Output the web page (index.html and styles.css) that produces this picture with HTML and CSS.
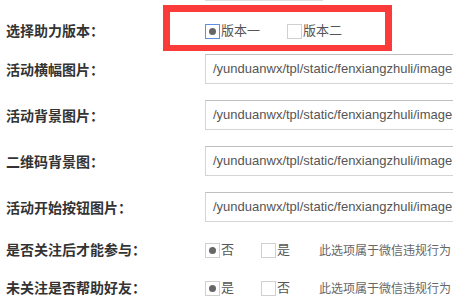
FILE: index.html
```html
<!DOCTYPE html>
<html lang="zh-CN">
<head>
<meta charset="utf-8">
<link rel="stylesheet" href="styles.css">
</head>
<body>
<div class="page">
  <div class="prev-edge"></div>
  <div class="row row-version">
    <div class="label">选择助力版本：</div>
    <div class="field">
      <label class="opt"><span class="box box-focus"><span class="dot"></span></span><span class="opt-text">版本一</span></label>
      <label class="opt"><span class="box"></span><span class="opt-text">版本二</span></label>
    </div>
    <div class="highlight"></div>
  </div>
  <div class="row">
    <div class="label">活动横幅图片：</div>
    <div class="field"><div class="input">/yunduanwx/tpl/static/fenxiangzhuli/image</div></div>
  </div>
  <div class="row">
    <div class="label">活动背景图片：</div>
    <div class="field"><div class="input">/yunduanwx/tpl/static/fenxiangzhuli/image</div></div>
  </div>
  <div class="row">
    <div class="label">二维码背景图：</div>
    <div class="field"><div class="input">/yunduanwx/tpl/static/fenxiangzhuli/image</div></div>
  </div>
  <div class="row">
    <div class="label">活动开始按钮图片：</div>
    <div class="field"><div class="input">/yunduanwx/tpl/static/fenxiangzhuli/image</div></div>
  </div>
  <div class="row row-radio row-r1">
    <div class="label">是否关注后才能参与：</div>
    <div class="field">
      <label class="opt"><span class="box"><span class="dot"></span></span><span class="opt-text">否</span></label>
      <label class="opt"><span class="box"></span><span class="opt-text">是</span></label>
      <span class="hint">此选项属于微信违规行为</span>
    </div>
  </div>
  <div class="row row-radio row-r2">
    <div class="label">未关注是否帮助好友：</div>
    <div class="field">
      <label class="opt"><span class="box"><span class="dot"></span></span><span class="opt-text">是</span></label>
      <label class="opt"><span class="box"></span><span class="opt-text">否</span></label>
      <span class="hint">此选项属于微信违规行为</span>
    </div>
  </div>
</div>
</body>
</html>
```

FILE: styles.css
```css
html, body {
  margin: 0;
  padding: 0;
  background: #ffffff;
  overflow: hidden;
}

.page {
  width: 453px;
  height: 299px;
  overflow: hidden;
  font-family: "Noto Sans CJK SC", "Liberation Sans", sans-serif;
  color: #333333;
}

.prev-edge {
  margin-left: 205px;
  width: 118px;
  height: 1px;
  background: #dddddd;
}

.row {
  position: relative;
  display: flex;
  align-items: center;
  height: 30px;
  margin-bottom: 16px;
}

.row-version {
  margin-top: 14px;
  margin-bottom: 9px;
}

.row-r1 {
  margin-top: -4px;
  margin-bottom: 8px;
}

.label {
  width: 199px;
  padding-left: 6px;
  flex-shrink: 0;
  font-size: 14px;
  font-weight: bold;
  line-height: 30px;
  color: #333333;
  white-space: nowrap;
}

.field {
  display: flex;
  align-items: center;
  flex: 1;
  min-width: 0;
}

.input {
  box-sizing: border-box;
  width: 248px;
  height: 30px;
  flex-shrink: 0;
  border: 1px solid #d4d4d4;
  border-top-color: #bfbfbf;
  border-right: none;
  padding: 0 0 0 7px;
  font-family: "Liberation Sans", Arial, sans-serif;
  font-size: 13px;
  line-height: 28px;
  color: #555555;
  white-space: nowrap;
}

.opt {
  display: flex;
  align-items: center;
  margin-right: 27px;
  font-size: 13px;
  line-height: 18px;
  color: #555555;
}

.box {
  box-sizing: border-box;
  width: 15px;
  height: 15px;
  border: 1px solid #d0d0d0;
  background: #ffffff;
  display: flex;
  align-items: center;
  justify-content: center;
  margin-right: 1px;
  margin-top: 2px;
}

.box-focus {
  border-color: #5b8fe0;
}

.dot {
  width: 7px;
  height: 7px;
  border-radius: 50%;
  background: #666666;
}

.opt-text {
  line-height: 18px;
}

.hint {
  margin-left: 2px;
  font-size: 12px;
  color: #666666;
  white-space: nowrap;
}

.highlight {
  position: absolute;
  left: 163px;
  top: -10px;
  width: 215px;
  height: 33px;
  border: 7px solid #fb3a3a;
  border-bottom-width: 6px;
  pointer-events: none;
}
```
